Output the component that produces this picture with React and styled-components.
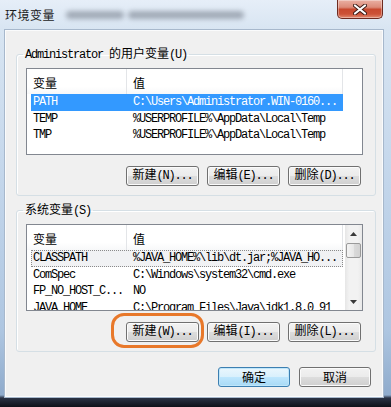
import React from 'react';
import styled, { createGlobalStyle } from 'styled-components';

const MONO = `"Liberation Mono", "Noto Sans CJK SC", monospace`;
const CJK = `"Noto Sans CJK SC", "Microsoft YaHei", sans-serif`;

const GlobalStyle = createGlobalStyle`
  html, body {
    margin: 0;
    padding: 0;
    background: #11151f;
  }
  body {
    width: 391px;
    height: 407px;
    overflow: hidden;
  }
`;

const Window = styled.div`
  position: relative;
  width: 391px;
  height: 407px;
  box-sizing: border-box;
  display: flex;
  flex-direction: column;
  padding: 0 7px 9px 4px;
  background: linear-gradient(to bottom,
    #e6eef8 0, #d8e5f2 29px, #c6d8ec 160px, #aec6e1 330px,
    #8fabcc 395px, #2a3244 398px, #0e1119 407px);
`;

const TitleBar = styled.div`
  position: relative;
  height: 29px;
  display: flex;
  align-items: flex-start;
  justify-content: space-between;
`;

const Title = styled.span`
  position: relative;
  z-index: 1;
  margin: 7px 0 0 1px;
  font-family: ${CJK};
  font-size: 12px;
  line-height: 16px;
  letter-spacing: 0.5px;
  color: #1a1a1a;
`;

const GlassBlur = styled.i`
  position: absolute;
  top: 11px;
  left: ${p => p.left}px;
  width: ${p => p.width}px;
  height: 8px;
  border-radius: 4px;
  background: #6f7784;
  opacity: 0.55;
  filter: blur(2.5px);
`;

const CloseButton = styled.div`
  width: 46px;
  height: 19px;
  margin-right: 1px;
  box-sizing: border-box;
  display: flex;
  align-items: center;
  justify-content: center;
  border: 1px solid #6d2a20;
  border-top: none;
  border-radius: 0 0 5px 5px;
  background: linear-gradient(to bottom,
    #eab0a3 0%, #dc8b79 40%, #c8492f 52%, #cc5237 78%, #e18b71 100%);
  box-shadow: inset 0 0 0 1px rgba(255, 255, 255, 0.35);
`;

const Client = styled.div`
  flex: 1;
  display: flex;
  flex-direction: column;
  padding-top: 17px;
  background: #f0f0f0;
  border: 1px solid #a7b8cc;
  box-shadow: inset 0 0 0 1px #fafbfc;
  font-family: ${MONO};
  font-size: 12px;
  letter-spacing: -1.2px;
  color: #000;
`;

const Group = styled.fieldset`
  margin: 0 7px 0 11px;
  padding: 7px 12px 9px 9px;
  min-width: 0;
  border: 1px solid #d5dfe5;
  border-radius: 3px;
  box-shadow: inset 1px 1px 0 #fff;

  & + & {
    margin-top: 7px;
  }
`;

const Legend = styled.legend`
  height: 14px;
  margin-left: -3px;
  padding: 0 2px;
  line-height: 14px;
  white-space: nowrap;
`;

const Cjk = styled.span`
  font-family: ${CJK};
  letter-spacing: 0;
  line-height: 1;
`;

const ListBox = styled.div`
  height: 87px;
  box-sizing: border-box;
  display: flex;
  border: 1px solid #828790;
  background: #fff;
  overflow: hidden;
`;

const Columns = styled.div`
  width: 316px;
  display: flex;
  flex-direction: column;
`;

const Header = styled.div`
  height: 25px;
  display: flex;
  flex-shrink: 0;
`;

const HeaderCell = styled.div`
  width: ${p => p.width}px;
  box-sizing: border-box;
  padding: 2px 0 0 6px;
  line-height: 23px;
  font-family: ${CJK};
  letter-spacing: 0;
  border-right: 1px solid #e3e5e8;
  background: linear-gradient(to bottom, #fff 0, #fff 70%, #f7f8f9 100%);
`;

const Row = styled.div`
  height: 16.5px;
  flex-shrink: 0;
  margin-left: 4px;
  display: flex;
  box-sizing: border-box;
  line-height: 16px;
  white-space: nowrap;
  color: ${p => (p.selected ? '#fff' : '#000')};
  background: ${p => (p.selected ? '#3399ff' : p.focused ? '#f1f2f4' : 'transparent')};
  outline: ${p => (p.focused ? '1px dotted #8a8a8a' : 'none')};
  outline-offset: -1px;
`;

const NameCell = styled.span`
  width: 96px;
  padding-left: 2px;
  box-sizing: border-box;
  overflow: hidden;
`;

const ValueCell = styled.span`
  flex: 1;
  padding-left: 6px;
  overflow: hidden;
`;

const ScrollBar = styled.div`
  width: 17px;
  margin-left: auto;
  display: flex;
  flex-direction: column;
  background: linear-gradient(to right, #e6e6e6 0, #f2f2f2 25%, #f2f2f2 75%, #e9e9e9 100%);
`;

const ScrollArrow = styled.div`
  height: 17px;
  flex-shrink: 0;
  display: flex;
  align-items: center;
  justify-content: center;
  margin-top: ${p => (p.down ? 'auto' : '0')};
`;

const Thumb = styled.div`
  height: 15px;
  margin: 1px 1px 0;
  box-sizing: border-box;
  border: 1px solid #9a9a9a;
  border-radius: 2px;
  background: linear-gradient(to right, #f4f4f4 0, #e7e7e7 50%, #dadada 51%, #d2d2d2 100%);
`;

const ButtonRow = styled.div`
  display: flex;
  justify-content: flex-end;
  gap: 8px;
  margin-top: 11px;
  padding-right: 2px;
`;

const Button = styled.button`
  width: ${p => p.width || 73}px;
  height: 20px;
  padding: 0;
  box-sizing: border-box;
  font-family: ${p => (p.cjk ? CJK : MONO)};
  font-size: 12px;
  line-height: 18px;
  letter-spacing: ${p => (p.cjk ? '0' : '-1.2px')};
  color: #000;
  border: 1px solid ${p => (p.primary ? '#3c7fb1' : '#707070')};
  border-radius: 3px;
  background: ${p =>
    p.primary
      ? 'linear-gradient(to bottom, #eaf6fd 0%, #d9f0fc 50%, #bee6fd 51%, #a7d9f5 100%)'
      : 'linear-gradient(to bottom, #f2f2f2 0%, #ebebeb 50%, #dddddd 51%, #cfcfcf 100%)'};
  box-shadow: inset 0 0 0 1px ${p => (p.primary ? '#bfe6fa' : '#fbfbfb')};
  white-space: nowrap;
`;

const Marked = styled.span`
  position: relative;
  display: flex;

  &::after {
    content: '';
    position: absolute;
    inset: -9px -5px -6px -15px;
    border: 3px solid #e8782a;
    border-radius: 13px;
    pointer-events: none;
  }
`;

const Footer = styled.div`
  display: flex;
  justify-content: flex-end;
  gap: 9px;
  margin: 15px 12px 0 0;
`;

const Arrow = ({ down }) => (
  <svg width="7" height="4" viewBox="0 0 7 4">
    <path d={down ? 'M0 0h7L3.5 4z' : 'M0 4h7L3.5 0z'} fill="#3a3a3a" />
  </svg>
);

const userVars = [
  ['PATH', 'C:\\Users\\Administrator.WIN-0160...', true],
  ['TEMP', '%USERPROFILE%\\AppData\\Local\\Temp'],
  ['TMP', '%USERPROFILE%\\AppData\\Local\\Temp'],
];

const systemVars = [
  ['CLASSPATH', '%JAVA_HOME%\\lib\\dt.jar;%JAVA_HO...', false, true],
  ['ComSpec', 'C:\\Windows\\system32\\cmd.exe'],
  ['FP_NO_HOST_C...', 'NO'],
  ['JAVA_HOME', 'C:\\Program Files\\Java\\jdk1.8.0_91'],
];

const VarList = ({ rows, scroll }) => (
  <ListBox>
    <Columns>
      <Header>
        <HeaderCell width={100}>变量</HeaderCell>
        <HeaderCell width={216}>值</HeaderCell>
      </Header>
      {rows.map(([name, value, selected, focused]) => (
        <Row key={name} selected={selected} focused={focused}>
          <NameCell>{name}</NameCell>
          <ValueCell>{value}</ValueCell>
        </Row>
      ))}
    </Columns>
    {scroll && (
      <ScrollBar>
        <ScrollArrow><Arrow /></ScrollArrow>
        <Thumb />
        <ScrollArrow down><Arrow down /></ScrollArrow>
      </ScrollBar>
    )}
  </ListBox>
);

const Label = ({ cjk, hotkey }) => (
  <>
    <Cjk>{cjk}</Cjk>({hotkey})...
  </>
);

export default function App() {
  return (
    <Window>
      <GlobalStyle />
      <TitleBar>
        <Title>环境变量</Title>
        <GlassBlur left={62} width={58} />
        <GlassBlur left={124} width={116} />
        <CloseButton>
          <svg width="14" height="11" viewBox="0 0 14 11">
            <path d="M2 1.5l10 8M12 1.5l-10 8" stroke="#3b1a14" strokeWidth="4" strokeLinecap="round" />
            <path d="M2 1.5l10 8M12 1.5l-10 8" stroke="#fff" strokeWidth="2.2" strokeLinecap="round" />
          </svg>
        </CloseButton>
      </TitleBar>
      <Client>
        <Group>
          <Legend>Administrator <Cjk>的用户变量</Cjk>(U)</Legend>
          <VarList rows={userVars} />
          <ButtonRow>
            <Button><Label cjk="新建" hotkey="N" /></Button>
            <Button><Label cjk="编辑" hotkey="E" /></Button>
            <Button><Label cjk="删除" hotkey="D" /></Button>
          </ButtonRow>
        </Group>
        <Group>
          <Legend><Cjk>系统变量</Cjk>(S)</Legend>
          <VarList rows={systemVars} scroll />
          <ButtonRow>
            <Marked>
              <Button><Label cjk="新建" hotkey="W" /></Button>
            </Marked>
            <Button><Label cjk="编辑" hotkey="I" /></Button>
            <Button><Label cjk="删除" hotkey="L" /></Button>
          </ButtonRow>
        </Group>
        <Footer>
          <Button cjk primary width={72}>确定</Button>
          <Button cjk width={72}>取消</Button>
        </Footer>
      </Client>
    </Window>
  );
}
